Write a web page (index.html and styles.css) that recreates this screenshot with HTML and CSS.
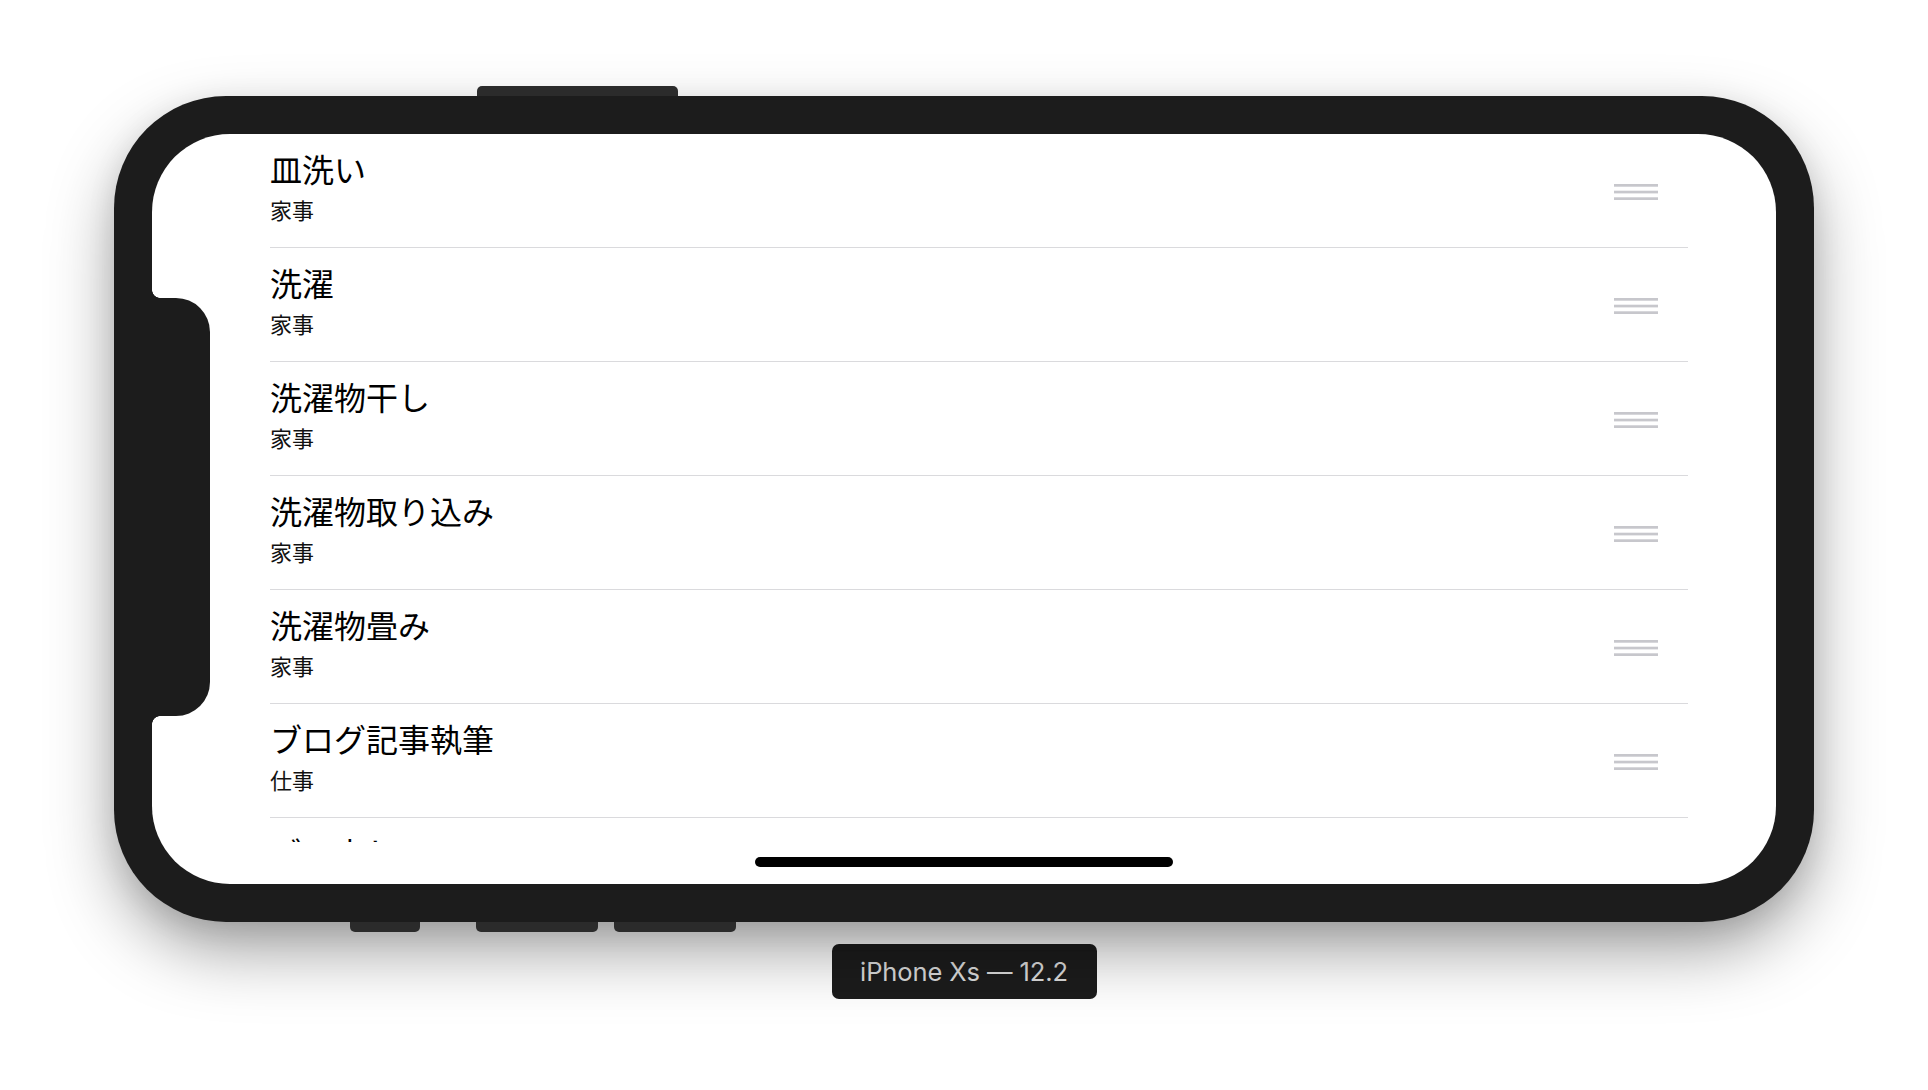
FILE: index.html
```html
<!DOCTYPE html>
<html lang="ja">
<head>
<meta charset="utf-8">
<title>iPhone Xs — 12.2</title>
<link rel="stylesheet" href="styles.css">
</head>
<body>
<main class="stage">
  <div class="phone">
    <span class="btn btn-top"></span>
    <span class="btn btn-bottom btn-b1"></span>
    <span class="btn btn-bottom btn-b2"></span>
    <span class="btn btn-bottom btn-b3"></span>
    <div class="screen">
      <ul class="list">
        <li class="row">
          <div class="texts"><div class="title">皿洗い</div><div class="detail">家事</div></div>
          <svg class="grabber" width="44" height="17" viewBox="0 0 44 17"><rect x="0" y="0" width="44" height="2.7"/><rect x="0" y="6.7" width="44" height="2.7"/><rect x="0" y="13.3" width="44" height="2.7"/></svg>
        </li>
        <li class="row">
          <div class="texts"><div class="title">洗濯</div><div class="detail">家事</div></div>
          <svg class="grabber" width="44" height="17" viewBox="0 0 44 17"><rect x="0" y="0" width="44" height="2.7"/><rect x="0" y="6.7" width="44" height="2.7"/><rect x="0" y="13.3" width="44" height="2.7"/></svg>
        </li>
        <li class="row">
          <div class="texts"><div class="title">洗濯物干し</div><div class="detail">家事</div></div>
          <svg class="grabber" width="44" height="17" viewBox="0 0 44 17"><rect x="0" y="0" width="44" height="2.7"/><rect x="0" y="6.7" width="44" height="2.7"/><rect x="0" y="13.3" width="44" height="2.7"/></svg>
        </li>
        <li class="row">
          <div class="texts"><div class="title">洗濯物取り込み</div><div class="detail">家事</div></div>
          <svg class="grabber" width="44" height="17" viewBox="0 0 44 17"><rect x="0" y="0" width="44" height="2.7"/><rect x="0" y="6.7" width="44" height="2.7"/><rect x="0" y="13.3" width="44" height="2.7"/></svg>
        </li>
        <li class="row">
          <div class="texts"><div class="title">洗濯物畳み</div><div class="detail">家事</div></div>
          <svg class="grabber" width="44" height="17" viewBox="0 0 44 17"><rect x="0" y="0" width="44" height="2.7"/><rect x="0" y="6.7" width="44" height="2.7"/><rect x="0" y="13.3" width="44" height="2.7"/></svg>
        </li>
        <li class="row">
          <div class="texts"><div class="title">ブログ記事執筆</div><div class="detail">仕事</div></div>
          <svg class="grabber" width="44" height="17" viewBox="0 0 44 17"><rect x="0" y="0" width="44" height="2.7"/><rect x="0" y="6.7" width="44" height="2.7"/><rect x="0" y="13.3" width="44" height="2.7"/></svg>
        </li>
        <li class="row">
          <div class="texts"><div class="title">ゴミ出し</div><div class="detail">家事</div></div>
          <svg class="grabber" width="44" height="17" viewBox="0 0 44 17"><rect x="0" y="0" width="44" height="2.7"/><rect x="0" y="6.7" width="44" height="2.7"/><rect x="0" y="13.3" width="44" height="2.7"/></svg>
        </li>
      </ul>
      <div class="home-indicator"></div>
    </div>
    <div class="notch"></div>
  </div>
  <div class="device-label">iPhone Xs — 12.2</div>
</main>
</body>
</html>
```

FILE: styles.css
```css
html, body {
  margin: 0;
  padding: 0;
  background: #ffffff;
}

body {
  width: 1928px;
  height: 1090px;
  overflow: hidden;
}

.stage {
  display: flex;
  flex-direction: column;
  align-items: center;
  padding-top: 96px;
}

.phone {
  position: relative;
  box-sizing: border-box;
  width: 1700px;
  height: 826px;
  padding: 38px;
  background: #1c1c1c;
  border-radius: 112px;
  box-shadow: 0 30px 70px -6px rgba(0, 0, 0, 0.42), 0 6px 30px rgba(0, 0, 0, 0.08);
}

.btn {
  position: absolute;
  height: 10px;
  background: #2b2b2b;
}

.btn-top {
  top: -10px;
  left: 363px;
  width: 201px;
  border-radius: 5px 5px 0 0;
}

.btn-bottom {
  bottom: -10px;
  border-radius: 0 0 5px 5px;
}

.btn-b1 { left: 236px; width: 70px; }
.btn-b2 { left: 362px; width: 122px; }
.btn-b3 { left: 500px; width: 122px; }

.screen {
  position: relative;
  width: 1624px;
  height: 750px;
  background: #ffffff;
  border-radius: 78px;
  overflow: hidden;
}

.list {
  list-style: none;
  margin: 0;
  padding: 0 88px 0 118px;
  height: 708px;
  overflow: hidden;
}

.row {
  display: flex;
  align-items: center;
  justify-content: space-between;
  height: 113px;
  padding-right: 30px;
  border-bottom: 1px solid #dadadd;
}

.texts {
  margin-bottom: 10px;
  font-family: "Noto Sans CJK JP", "Noto Sans", sans-serif;
  color: #000;
}

.title {
  font-size: 32px;
  line-height: 40px;
  margin-bottom: 6px;
}

.detail {
  font-size: 22px;
  line-height: 30px;
  color: #111;
}

.grabber {
  display: block;
  fill: #c7c7cc;
  margin-top: 3px;
}

.home-indicator {
  position: absolute;
  left: 603px;
  bottom: 17px;
  width: 418px;
  height: 10px;
  border-radius: 5px;
  background: #000;
}

.notch {
  position: absolute;
  left: 38px;
  top: 202px;
  width: 58px;
  height: 418px;
  background: #1c1c1c;
  border-radius: 0 34px 34px 0;
}

.notch::before,
.notch::after {
  content: "";
  position: absolute;
  left: 0;
  width: 8px;
  height: 8px;
}

.notch::before {
  top: -8px;
  background: radial-gradient(circle at 100% 0%, transparent 7.5px, #1c1c1c 8px);
}

.notch::after {
  bottom: -8px;
  background: radial-gradient(circle at 100% 100%, transparent 7.5px, #1c1c1c 8px);
}

.device-label {
  margin-top: 22px;
  box-sizing: border-box;
  width: 265px;
  height: 55px;
  display: flex;
  align-items: center;
  justify-content: center;
  background: #1c1c1c;
  border-radius: 7px;
  color: #dcdcdc;
  font-family: Inter, "Liberation Sans", sans-serif;
  font-size: 25.5px;
  letter-spacing: -0.1px;
}
```
